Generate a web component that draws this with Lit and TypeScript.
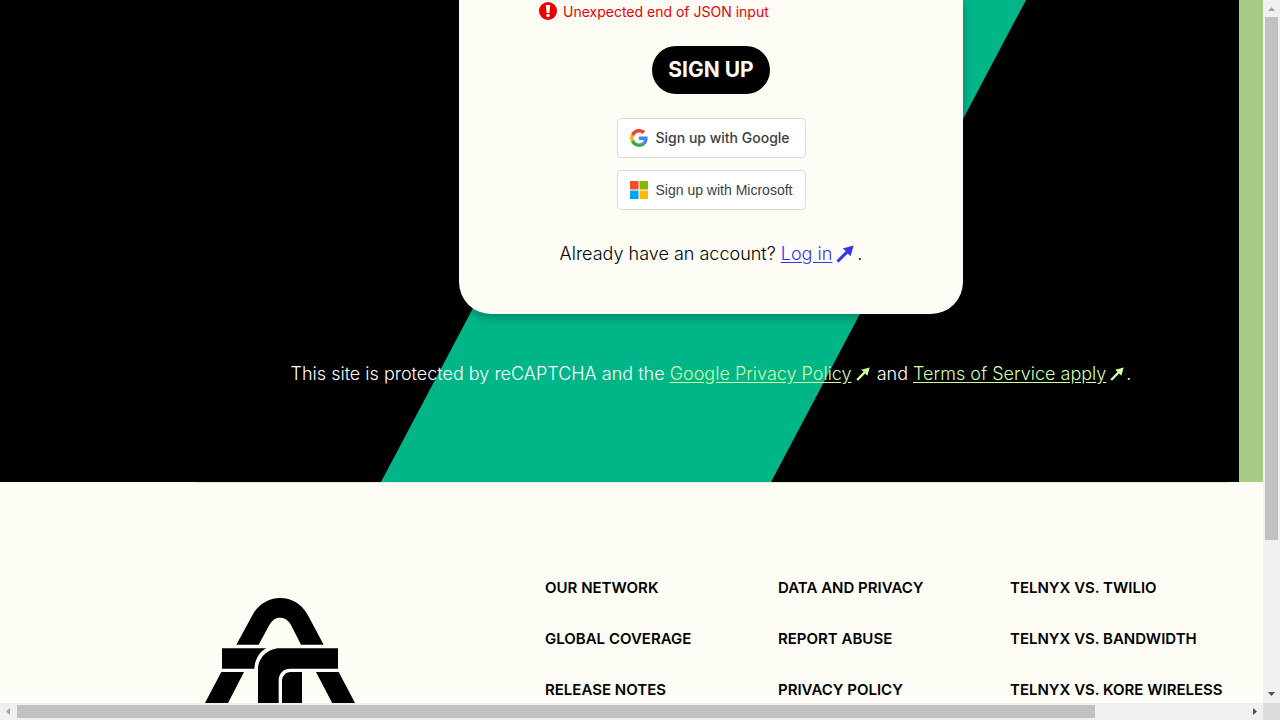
import { LitElement, html, css, svg } from "lit";
import { customElement } from "lit/decorators.js";

const arrow = html`<svg class="arrow" viewBox="0 0 18 18" aria-hidden="true">
  <path d="M17.6 0.6 L14.6 11.2 L11.800 8.400 L2.600 17.600 L0.400 15.600 L9.800 6 L6.600 3.400 Z" fill="currentColor" />
</svg>`;

const columns = [
  ["Our Network", "Global Coverage", "Release Notes"],
  ["Data and Privacy", "Report Abuse", "Privacy Policy"],
  ["Telnyx vs. Twilio", "Telnyx vs. Bandwidth", "Telnyx vs. Kore Wireless"],
];

const legs = svg`<path d="M94 276H162L91 414H21Z" /><path d="M378 276H446L519 414H450Z" />`;

@customElement("app-root")
export class AppRoot extends LitElement {
  static styles = css`
    :host {
      display: grid;
      grid-template-columns: minmax(0, 1fr) 17px;
      grid-template-rows: minmax(0, 1fr) 17px;
      height: 100vh;
      font-family: Inter, sans-serif;
      color: #000;
      background: #fefdf5;
    }
    .view { overflow: hidden; }
    .hero {
      position: relative;
      background: #000;
      border-right: 24px solid #a8cc83;
      padding: 0 0 96px 183px;
    }
    .stripe {
      position: absolute;
      inset: 0;
      background: #00b588;
      clip-path: polygon(636px 0, 1026px 0, 771px 100%, 381px 100%);
    }
    .card {
      position: relative;
      box-sizing: border-box;
      max-width: 504px;
      margin: 0 auto;
      padding: 0 80px 48px;
      border-radius: 0 0 32px 32px;
      background: #fefdf5;
      box-shadow: 0 4px 8px rgba(0, 0, 0, 0.25);
      display: flex;
      flex-direction: column;
      align-items: center;
    }
    .error {
      align-self: stretch;
      display: flex;
      align-items: center;
      gap: 4px;
      margin: 0 0 22px;
      font-size: 14px;
      line-height: 24px;
      color: #eb0000;
    }
    .error svg { width: 20px; height: 20px; }
    button { cursor: pointer; }
    .submit {
      height: 48px;
      padding: 0 16px;
      border: 0;
      border-radius: 24px;
      background: #000;
      color: #fefdf5;
      font: 700 21px/24px Inter, sans-serif;
      margin-bottom: 24px;
    }
    .social {
      box-sizing: border-box;
      display: flex;
      align-items: center;
      gap: 8px;
      width: 189px;
      height: 40px;
      padding: 0 12px;
      margin-bottom: 12px;
      border: 1px solid #dadce0;
      border-radius: 4px;
      background: #fff;
      color: #3c4043;
      font: 500 14px/20px Inter, sans-serif;
      white-space: nowrap;
    }
    .microsoft { font: 400 14px/20px "Liberation Sans", sans-serif; }
    .social svg { width: 18px; height: 18px; flex: none; }
    .login {
      margin: 20px 0 0;
      font-size: 18px;
      font-weight: 300;
      line-height: 24px;
    }
    .login a { color: #3434ef; }
    .arrow { width: 18px; height: 18px; vertical-align: -3px; margin: 0 3px 0 4px; }
    .login .arrow { color: #3434ef; }
    .legal {
      position: relative;
      margin: 48px 0 0;
      text-align: center;
      font-size: 18px;
      font-weight: 300;
      line-height: 24px;
      color: #fff;
    }
    .legal a { color: #d3ffa6; }
    .legal .arrow { width: 14px; height: 14px; margin: 0 2px 0 4px; vertical-align: -1px; color: #d3ffa6; }
    a { text-underline-offset: 2px; }
    footer { padding-left: 190px; }
    hr { height: 1px; margin: 0 35px 0 6px; border: 0; background: #ece6d3; }
    .sitemap {
      display: grid;
      grid-template-columns: 355fr 233fr 232fr 253fr;
      padding-top: 93px;
    }
    .logo { width: 180px; height: 120px; margin-top: 22px; }
    ul {
      list-style: none;
      margin: 0;
      padding: 0;
      display: grid;
      gap: 27px;
      align-content: start;
    }
    li { line-height: 24px; font-size: 15px; font-weight: 600; white-space: nowrap; }
    li a { color: #000; text-decoration: none; text-transform: uppercase; }
    .bar { background: #f0f0f0; display: flex; align-items: center; justify-content: space-between; }
    .vertical { flex-direction: column; }
    .bar svg { width: 17px; height: 17px; flex: none; }
    .track { flex: 1; display: flex; align-self: stretch; }
    .vertical .track { flex-direction: column; padding: 0 2px; }
    .horizontal .track { padding: 2px 0; }
    .thumb { background: #c1c1c1; }
    .vertical .thumb { height: 78.2%; }
    .horizontal .thumb { width: 87.7%; }
    .corner { background: #dcdcdc; }
  `;

  render() {
    return html`
      <main class="view">
        <section class="hero">
          <div class="stripe"></div>
          <form class="card" @submit=${(e: Event) => e.preventDefault()}>
            <p class="error" role="alert">
              <svg viewBox="0 0 20 20" aria-hidden="true">
                <circle cx="9" cy="9" r="9" fill="#eb0000" />
                <path d="M6.800 3h4.400l-.8 8H7.600z" fill="#fefdf5" />
                <circle cx="9" cy="13.500" r="1.700" fill="#fefdf5" />
              </svg>
              Unexpected end of JSON input
            </p>
            <button class="submit" type="submit">SIGN UP</button>
            <button class="social" type="button">
              <svg viewBox="0 0 48 48" aria-hidden="true">
                <path fill="#EA4335" d="M24 9.500c3.540 0 6.710 1.220 9.210 3.600l6.850-6.850C35.900 2.380 30.470 0 24 0 14.620 0 6.510 5.380 2.560 13.220l7.980 6.190C12.430 13.720 17.740 9.500 24 9.500z" />
                <path fill="#4285F4" d="M46.980 24.550c0-1.570-.15-3.090-.38-4.550H24v9.020h12.940c-.58 2.960-2.260 5.480-4.780 7.180l7.730 6c4.510-4.180 7.090-10.360 7.090-17.650z" />
                <path fill="#FBBC05" d="M10.530 28.590c-.48-1.450-.76-2.990-.76-4.590s.27-3.140.76-4.590l-7.980-6.190C.92 16.460 0 20.120 0 24c0 3.880.92 7.540 2.560 10.780l7.970-6.190z" />
                <path fill="#34A853" d="M24 48c6.480 0 11.930-2.130 15.890-5.810l-7.730-6c-2.150 1.450-4.920 2.300-8.160 2.300-6.260 0-11.570-4.220-13.470-9.910l-7.980 6.190C6.510 42.620 14.620 48 24 48z" />
              </svg>
              Sign up with Google
            </button>
            <button class="social microsoft" type="button">
              <svg viewBox="0 0 36 36" aria-hidden="true">
                <path fill="#f25022" d="M0 0h17v17H0z" />
                <path fill="#7fba00" d="M19 0h17v17H19z" />
                <path fill="#00a4ef" d="M0 19h17v17H0z" />
                <path fill="#ffb900" d="M19 19h17v17H19z" />
              </svg>
              Sign up with Microsoft
            </button>
            <p class="login">Already have an account? <a href="#login">Log in</a>${arrow}.</p>
          </form>
          <p class="legal">
            This site is protected by reCAPTCHA and the
            <a href="#privacy">Google Privacy Policy</a>${arrow}
            and <a href="#terms">Terms of Service apply</a>${arrow}.
          </p>
        </section>
        <footer>
          <hr />
          <div class="sitemap">
            <svg class="logo" viewBox="0 54 540 360" role="img" aria-label="Telnyx">
              <path d="M139 194L188 104C205 74 235 54 270 54S335 72 353 104L401 194H333L303 135C296 121 284 113 270 113S246 121 238 135L206 194Z" />
              <path d="M96 205H229C208 215 194 240 193 266H96Z" />
              <path d="M204 414V269C204 234 233 205 270 205H444V266H301C280 266 266 280 266 301V414Z" />
              <path d="M276 414V303C276 288 287 276 302 276H336V414Z" />
              ${legs}
            </svg>
            ${columns.map(
              (links) => html`<ul>
                ${links.map((label) => html`<li><a href="#">${label}</a></li>`)}
              </ul>`
            )}
          </div>
        </footer>
      </main>
      <div class="bar vertical">
        <svg viewBox="0 0 17 17"><path d="M5 11h7L8.500 7z" fill="#a3a3a3" /></svg>
        <div class="track"><div class="thumb"></div></div>
        <svg viewBox="0 0 17 17"><path d="M5 6h7l-3.500 4z" fill="#505050" /></svg>
      </div>
      <div class="bar horizontal">
        <svg viewBox="0 0 17 17"><path d="M10 5v7L6 8.500z" fill="#a3a3a3" /></svg>
        <div class="track"><div class="thumb"></div></div>
        <svg viewBox="0 0 17 17"><path d="M7 5v7l4-3.500z" fill="#505050" /></svg>
      </div>
      <div class="corner"></div>
    `;
  }
}
